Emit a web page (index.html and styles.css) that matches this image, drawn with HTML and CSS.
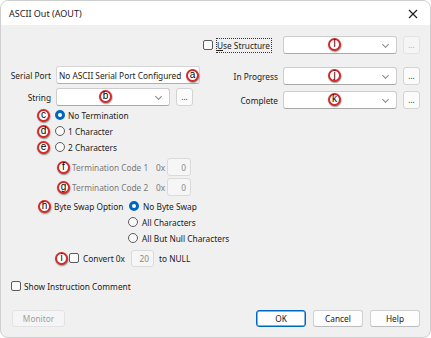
FILE: index.html
```html
<!DOCTYPE html>
<html lang="en">
<head>
  <meta charset="UTF-8" />
  <meta name="viewport" content="width=device-width, initial-scale=1.0"/>
  <title>ASCII Out (AOUT)</title>
  <link rel="stylesheet" href="styles.css">
</head>
<body>
  <div class="window">
    <div class="titlebar">
      <span class="title">ASCII Out (AOUT)</span>
      <svg class="close" width="10" height="10" viewBox="0 0 10 10">
        <path d="M1 1 L9 9 M9 1 L1 9" stroke="#1a1a1a" stroke-width="1.1" fill="none"/>
      </svg>
    </div>

    <div class="content">
      <div class="struct-row">
        <span class="check"><span class="box"></span><span class="focus-text"><u>U</u>se Structure</span></span>
        <div class="combo">
          <span class="badge in-combo">l</span>
          <span class="chevron"></span>
        </div>
        <button class="dots disabled">...</button>
      </div>

      <div class="columns">
        <div class="left">
          <div class="field-row serial-row">
            <span class="label">Serial Port</span>
            <div class="textbox serial">No ASCII Serial Port Configured<span class="badge at-end">a</span></div>
          </div>
          <div class="field-row string-row">
            <span class="label">String</span>
            <div class="combo">
              <span class="badge in-combo string-badge">b</span>
              <span class="chevron"></span>
            </div>
            <button class="dots">...</button>
          </div>

          <div class="opt-row term-opt first">
            <span class="badge">c</span><span class="radio checked"></span><span>No Termination</span>
          </div>
          <div class="opt-row term-opt">
            <span class="badge">d</span><span class="radio"></span><span>1 Character</span>
          </div>
          <div class="opt-row term-opt">
            <span class="badge">e</span><span class="radio"></span><span>2 Characters</span>
          </div>

          <div class="code-row first">
            <span class="badge">f</span>
            <span class="code-label">Termination Code 1</span>
            <span class="hex">0x</span>
            <div class="textbox small disabled">0</div>
          </div>
          <div class="code-row">
            <span class="badge">g</span>
            <span class="code-label">Termination Code 2</span>
            <span class="hex">0x</span>
            <div class="textbox small disabled">0</div>
          </div>

          <div class="opt-row swap-row">
            <span class="badge">h</span>
            <span class="swap-label">Byte Swap Option</span>
            <span class="radio checked"></span><span>No Byte Swap</span>
          </div>
          <div class="opt-row swap-opt">
            <span class="radio"></span><span>All Characters</span>
          </div>
          <div class="opt-row swap-opt">
            <span class="radio"></span><span>All But Null Characters</span>
          </div>

          <div class="convert-row">
            <span class="badge">i</span>
            <span class="box"></span>
            <span class="convert-label">Convert 0x</span>
            <div class="textbox tiny disabled">20</div>
            <span>to NULL</span>
          </div>
        </div>

        <div class="right">
          <div class="field-row progress-row">
            <span class="label">In Progress</span>
            <div class="combo">
              <span class="badge in-combo">j</span>
              <span class="chevron"></span>
            </div>
            <button class="dots">...</button>
          </div>
          <div class="field-row complete-row">
            <span class="label">Complete</span>
            <div class="combo">
              <span class="badge in-combo">k</span>
              <span class="chevron"></span>
            </div>
            <button class="dots">...</button>
          </div>
        </div>
      </div>

      <div class="check show-comment"><span class="box"></span><span>Show Instruction Comment</span></div>

      <div class="button-row">
        <button class="btn disabled">Monitor</button>
        <span class="spacer"></span>
        <button class="btn default">OK</button>
        <button class="btn">Cancel</button>
        <button class="btn">Help</button>
      </div>
    </div>
  </div>
</body>
</html>
```

FILE: styles.css
```css
* {
  box-sizing: border-box;
  margin: 0;
  padding: 0;
}

body {
  font-family: "Noto Sans", sans-serif;
  font-size: 8.3px;
  color: #1b1b1b;
  background: #ffffff;
}

.window {
  width: 431px;
  height: 338px;
  border: 1px solid #cfcfcf;
  border-radius: 8px;
  overflow: hidden;
  display: flex;
  flex-direction: column;
  background: #f0f0f0;
}

.titlebar {
  height: 24px;
  background: #ffffff;
  display: flex;
  align-items: center;
  padding: 1px 9px 0 8px;
}

.title {
  font-size: 9px;
  flex: 1;
}

.close {
  margin-right: 3px;
}

.content {
  flex: 1;
  padding: 11px 10px 0 10px;
  display: flex;
  flex-direction: column;
}

/* top row */
.struct-row {
  display: flex;
  justify-content: flex-end;
  align-items: center;
  height: 18px;
}

.struct-row .check {
  margin-right: 11px;
}

.check {
  display: flex;
  align-items: center;
  gap: 3px;
}

.focus-text {
  border: 1px dotted #333;
  padding: 1px 1px 1px 0;
  line-height: 11px;
}

.box {
  width: 10px;
  height: 10px;
  border: 1px solid #5c5c5c;
  border-radius: 2px;
  background: #fbfbfb;
  flex-shrink: 0;
}

/* fields */
.combo {
  position: relative;
  width: 114px;
  height: 18px;
  background: #ffffff;
  border: 1px solid #cdcdcd;
  border-bottom-color: #a8a8a8;
  border-radius: 3px;
}

.chevron {
  position: absolute;
  right: 8px;
  top: 5px;
  width: 5px;
  height: 5px;
  border-right: 1px solid #8a8a8a;
  border-bottom: 1px solid #8a8a8a;
  transform: rotate(45deg);
}

.dots {
  width: 17px;
  height: 18px;
  margin-left: 6px;
  background: #fbfbfb;
  border: 1px solid #d3d3d3;
  border-radius: 3px;
  font-family: inherit;
  font-size: 8px;
  color: #333;
  line-height: 12px;
}

.dots.disabled {
  background: #f5f5f5;
  border-color: #e3e3e3;
  color: #b0b0b0;
}

.textbox {
  position: relative;
  height: 18px;
  background: #ffffff;
  border: 1px solid #d6d6d6;
  border-bottom-color: #b0b0b0;
  border-radius: 3px;
  display: flex;
  align-items: center;
  padding-left: 2px;
  white-space: nowrap;
}

.textbox.serial {
  width: 144px;
}

.textbox.disabled {
  background: #f6f6f6;
  border-color: #dadada;
  color: #8a8a8a;
  justify-content: flex-end;
  padding-right: 4px;
}

.textbox.small {
  width: 24px;
}

.textbox.tiny {
  width: 23px;
  height: 17px;
  margin-right: 5px;
}

/* badges */
.badge {
  width: 13px;
  height: 13px;
  border-radius: 50%;
  border: 2px solid #d42a2a;
  background: #ffffff;
  box-shadow: 0.5px 1px 1.5px rgba(0, 0, 0, 0.45);
  display: inline-flex;
  align-items: center;
  justify-content: center;
  font-family: "Liberation Sans", sans-serif;
  font-size: 10px;
  line-height: 1;
  color: #000;
  flex-shrink: 0;
  padding-bottom: 1px;
}

.badge.in-combo {
  position: absolute;
  left: 44px;
  top: 1px;
}

.badge.string-badge {
  left: 42px;
}

.badge.at-end {
  position: absolute;
  right: 0;
  top: 1.5px;
}

/* columns */
.columns {
  display: flex;
  justify-content: space-between;
}

.field-row {
  display: flex;
  align-items: center;
  height: 18px;
}

.label {
  display: flex;
  justify-content: flex-end;
  white-space: nowrap;
  margin-right: 5px;
}

.left .label {
  width: 40px;
}

.serial-row {
  margin-top: 12px;
}

.string-row {
  margin-top: 4px;
}

.progress-row {
  margin-top: 13px;
}

.complete-row {
  margin-top: 6px;
}

.right .field-row {
  justify-content: flex-end;
}

/* options */
.opt-row {
  display: flex;
  align-items: center;
  height: 16px;
}

.term-opt {
  padding-left: 26px;
}

.term-opt.first {
  margin-top: 1px;
}

.term-opt .badge {
  margin-right: 5px;
}

.radio {
  width: 10px;
  height: 10px;
  border-radius: 50%;
  border: 1px solid #5e5e5e;
  background: #f8f8f8;
  margin-right: 3px;
  flex-shrink: 0;
}

.radio.checked {
  border: 3px solid #0067c0;
  background: #ffffff;
}

.code-row {
  display: flex;
  align-items: center;
  height: 18px;
  margin-top: 2px;
  padding-left: 46px;
  color: #7a7a7a;
}

.code-row.first {
  margin-top: 3px;
}

.code-row .badge {
  margin-right: 2px;
}

.code-label {
  width: 84px;
}

.hex {
  width: 11px;
}

.swap-row {
  margin-top: 2px;
  padding-left: 27px;
}

.swap-row .badge {
  margin-right: 3px;
}

.swap-label {
  width: 75px;
}

.swap-opt {
  padding-left: 117px;
}

.swap-opt .radio,
.swap-row .radio {
  margin-right: 4px;
}

.convert-row {
  display: flex;
  align-items: center;
  height: 18px;
  margin-top: 3px;
  padding-left: 44px;
}

.convert-row .badge {
  margin-right: 1px;
}

.convert-row .box {
  margin-right: 4px;
}

.convert-label {
  width: 48px;
}

.show-comment {
  margin-top: 11px;
  height: 16px;
}

/* buttons */
.button-row {
  display: flex;
  align-items: center;
  gap: 7px;
  margin-top: 16px;
}

.spacer {
  flex: 1;
}

.btn {
  width: 50px;
  height: 17px;
  background: #fdfdfd;
  border: 1px solid #d0d0d0;
  border-bottom-color: #bcbcbc;
  border-radius: 3px;
  font-family: inherit;
  font-size: 8.3px;
  color: #1b1b1b;
}

.btn.default {
  border: 1px solid #0067c0;
  box-shadow: inset 0 0 0 0.5px #0067c0;
}

.btn.disabled {
  width: 53px;
  margin-left: 1px;
  background: #f5f5f5;
  border-color: #e3e3e3;
  color: #a0a0a0;
}
```
